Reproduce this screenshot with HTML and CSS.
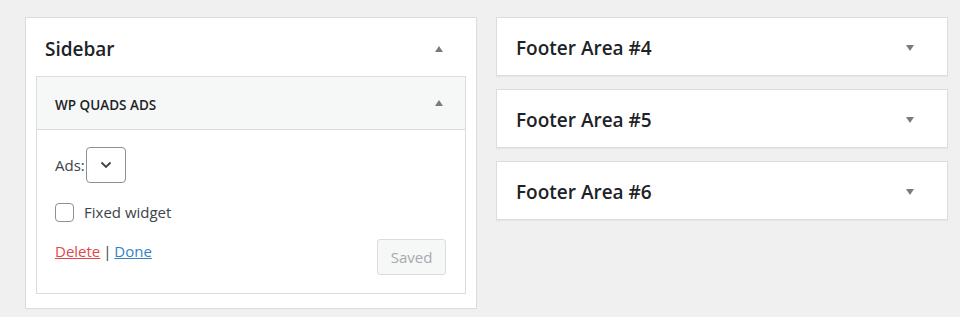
FILE: index.html
```html
<!DOCTYPE html>
<html lang="en">
<head>
  <meta charset="UTF-8" />
  <meta name="viewport" content="width=device-width, initial-scale=1.0" />
  <title>Widgets</title>
  <link rel="stylesheet" href="styles.css">
</head>
<body>
  <div class="col">
    <div class="panel">
      <div class="panel-head">
        <h2>Sidebar</h2>
        <span class="arrow up"></span>
      </div>

      <div class="widget">
        <div class="widget-head">
          <h3>WP QUADS ADS</h3>
          <span class="arrow up"></span>
        </div>
        <div class="widget-body">
          <div class="field">
            <label>Ads:</label>
            <div class="select">
              <svg width="12" height="8" viewBox="0 0 12 8"><path d="M1.5 1.5 L6 6 L10.5 1.5" fill="none" stroke="#3c434a" stroke-width="1.8"/></svg>
            </div>
          </div>
          <label class="check"><span class="box"></span>Fixed widget</label>
          <div class="actions">
            <div class="links">
              <a href="#" class="delete">Delete</a> | <a href="#" class="done">Done</a>
            </div>
            <button class="saved" disabled>Saved</button>
          </div>
        </div>
      </div>
    </div>
  </div>

  <div class="col">
    <div class="panel small">
      <div class="panel-head">
        <h2>Footer Area #4</h2>
        <span class="arrow down"></span>
      </div>
    </div>
    <div class="panel small">
      <div class="panel-head">
        <h2>Footer Area #5</h2>
        <span class="arrow down"></span>
      </div>
    </div>
    <div class="panel small">
      <div class="panel-head">
        <h2>Footer Area #6</h2>
        <span class="arrow down"></span>
      </div>
    </div>
  </div>
</body>
</html>
```

FILE: styles.css
```css
* {
  box-sizing: border-box;
  margin: 0;
  padding: 0;
  font-family: 'Open Sans', sans-serif;
}

body {
  background: #f0f0f1;
  display: flex;
  gap: 19px;
  padding: 17px 0 0 25px;
  color: #3c434a;
}

.col {
  width: 452px;
  display: flex;
  flex-direction: column;
  gap: 13px;
}

.panel {
  background: #fff;
  border: 1px solid #dcdcde;
  box-shadow: 0 1px 1px rgba(0, 0, 0, 0.04);
}

.panel-head {
  height: 58px;
  display: flex;
  align-items: center;
  justify-content: space-between;
  padding: 3px 33px 0 19px;
}

.small .panel-head {
  height: 57px;
}

h2 {
  font-size: 19px;
  font-weight: 600;
  color: #1d2327;
}

.arrow {
  width: 0;
  height: 0;
  border-left: 4.5px solid transparent;
  border-right: 4.5px solid transparent;
}

.arrow.up {
  border-bottom: 6px solid #787c82;
}

.arrow.down {
  border-top: 6px solid #787c82;
}

.widget {
  margin: 0 10px 14px;
  border: 1px solid #dcdcde;
}

.widget-head {
  height: 53px;
  background: #f6f7f7;
  border-bottom: 1px solid #dcdcde;
  display: flex;
  align-items: center;
  justify-content: space-between;
  padding: 0 22px 0 18px;
}

h3 {
  font-size: 13.5px;
  font-weight: 600;
  color: #1d2327;
  margin-top: 3px;
}

.widget-body {
  padding: 17px 18px 18px 18px;
  font-size: 15px;
}

.field {
  display: flex;
  align-items: center;
}

.select {
  width: 40px;
  height: 36px;
  margin-left: 1px;
  border: 1px solid #8c8f94;
  border-radius: 4px;
  display: flex;
  align-items: center;
  justify-content: center;
}

.check {
  display: flex;
  align-items: center;
  gap: 10px;
  margin-top: 19px;
}

.box {
  width: 19px;
  height: 19px;
  border: 1px solid #8c8f94;
  border-radius: 4px;
}

.actions {
  display: flex;
  justify-content: space-between;
  align-items: flex-start;
  margin-top: 17px;
}

.links {
  margin-top: 2px;
  color: #3c434a;
  word-spacing: -1px;
}

a {
  text-decoration: underline;
}

a.delete {
  color: #e0484a;
}

a.done {
  color: #3582c4;
}

button.saved {
  width: 69px;
  height: 36px;
  background: #f6f7f7;
  border: 1px solid #dcdcde;
  border-radius: 3px;
  color: #a7aaad;
  font-size: 15px;
  margin-right: 1px;
}
```
